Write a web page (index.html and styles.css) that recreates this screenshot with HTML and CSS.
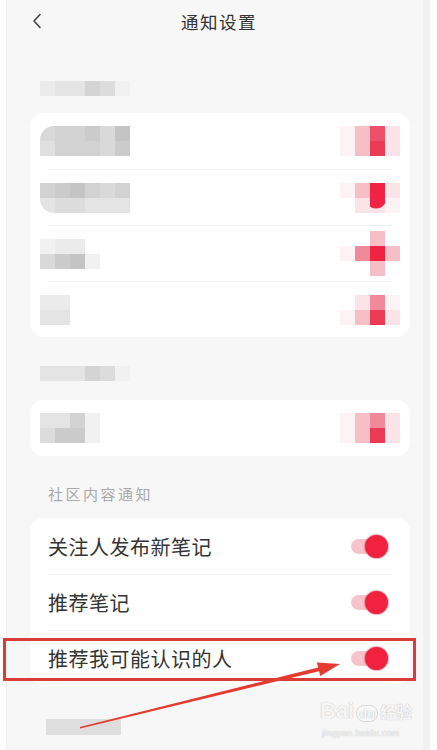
FILE: index.html
```html
<!DOCTYPE html>
<html lang="zh-CN">
<head>
    <meta charset="UTF-8">
    <meta name="viewport" content="width=device-width, initial-scale=1.0">
    <title>通知设置</title>
    <link rel="stylesheet" href="styles.css">
</head>
<body>
<div class="screen">
    <div class="page">

        <header class="topbar">
            <span class="back">
                <svg width="10" height="16" viewBox="0 0 10 16"><path d="M8 1.5 L2 8 L8 14.5" fill="none" stroke="#444" stroke-width="1.6" stroke-linecap="round" stroke-linejoin="round"/></svg>
            </span>
            <h1 class="title">通知设置</h1>
            <span></span>
        </header>

        <!-- blurred section label -->
        <div class="mosaic cols6 label-blur first-label">
            <i class="g2"></i><i class="g3"></i><i class="g3"></i><i class="g5"></i><i class="g4"></i><i class="g1"></i>
        </div>

        <section class="card">
            <div class="row">
                <div class="mosaic cols6 text-blur round-tl">
                    <i class="h2"></i><i class="h3"></i><i class="h3"></i><i class="h4"></i><i class="h2"></i><i class="h5"></i>
                    <i class="h1"></i><i class="h3"></i><i class="h3"></i><i class="h3"></i><i class="h2"></i><i class="h4"></i>
                </div>
                <div class="mosaic cols4 switch-blur">
                    <i class="p0"></i><i class="p2"></i><i class="p4"></i><i class="p1"></i>
                    <i class="p0"></i><i class="p2"></i><i class="p5"></i><i class="p1"></i>
                </div>
            </div>
            <div class="row">
                <div class="mosaic cols6 text-blur round-bl">
                    <i class="h3"></i><i class="h4"></i><i class="h5"></i><i class="h3"></i><i class="h2"></i><i class="h3"></i>
                    <i class="g3"></i><i class="g4"></i><i class="g4"></i><i class="g3"></i><i class="g3"></i><i class="g3"></i>
                </div>
                <div class="mosaic cols4 switch-blur">
                    <i class="p0"></i><i class="p2"></i><i class="p6"></i><i class="p1"></i>
                    <i class="w"></i><i class="p1"></i><i class="p1 drop"></i><i class="p0"></i>
                </div>
            </div>
            <div class="row">
                <div class="mosaic cols4 text-blur">
                    <i class="g1"></i><i class="g2"></i><i class="g2"></i><i class="w"></i>
                    <i class="h2"></i><i class="h4"></i><i class="h5"></i><i class="g1"></i>
                </div>
                <div class="mosaic cols4 switch-blur tall">
                    <i class="w"></i><i class="w"></i><i class="p2"></i><i class="w"></i>
                    <i class="p0"></i><i class="p3"></i><i class="p6"></i><i class="p2"></i>
                    <i class="w"></i><i class="w"></i><i class="p2"></i><i class="w"></i>
                </div>
            </div>
            <div class="row">
                <div class="mosaic cols2 text-blur">
                    <i class="g2"></i><i class="g2"></i>
                    <i class="g3"></i><i class="g3"></i>
                </div>
                <div class="mosaic cols4 switch-blur">
                    <i class="w"></i><i class="p1"></i><i class="p3"></i><i class="p0"></i>
                    <i class="p0"></i><i class="p2"></i><i class="p5"></i><i class="p1"></i>
                </div>
            </div>
        </section>

        <div class="mosaic cols6 label-blur second-label">
            <i class="g3"></i><i class="g3"></i><i class="g3"></i><i class="g5"></i><i class="g4"></i><i class="g1"></i>
        </div>

        <section class="card">
            <div class="row">
                <div class="mosaic cols4 text-blur">
                    <i class="g3"></i><i class="g3"></i><i class="h3"></i><i class="g1"></i>
                    <i class="g4"></i><i class="h4"></i><i class="h4"></i><i class="g1"></i>
                </div>
                <div class="mosaic cols4 switch-blur">
                    <i class="p0"></i><i class="p2"></i><i class="p3"></i><i class="p1"></i>
                    <i class="p0"></i><i class="p2"></i><i class="p5"></i><i class="p1"></i>
                </div>
            </div>
        </section>

        <h2 class="group-title">社区内容通知</h2>

        <section class="card">
            <div class="row">
                <span class="row-text">关注人发布新笔记</span>
                <span class="toggle"><span class="track"></span><span class="thumb"></span></span>
            </div>
            <div class="row">
                <span class="row-text">推荐笔记</span>
                <span class="toggle"><span class="track"></span><span class="thumb"></span></span>
            </div>
            <div class="row">
                <span class="row-text">推荐我可能认识的人</span>
                <span class="toggle"><span class="track"></span><span class="thumb"></span></span>
            </div>
        </section>

        <div class="bottom-blur"></div>
    </div>

    <!-- annotation overlays -->
    <div class="highlight"></div>
    <svg class="arrow" width="437" height="750" viewBox="0 0 437 750">
        <polygon fill="#e53a2f" points="79.8,726.9 318.1,667.4 316.9,662.5 340,664 320.3,676.1 319.1,671.2 80.2,728.5"/>
    </svg>

    <div class="watermark">
        <div class="wm-logo">Bai<span class="wm-du">du</span><span class="wm-cn">经验</span></div>
        <div class="wm-url">jingyan.baidu.com</div>
    </div>
</div>
</body>
</html>
```

FILE: styles.css
```css
body {
    margin: 0;
    background: #fdfdfd;
    font-family: "Noto Sans CJK SC", "Noto Sans", sans-serif;
    color: #333;
}

.screen {
    position: relative;
    width: 437px;
    height: 750px;
    overflow: hidden;
}

.page {
    margin-left: 6px;
    width: 424px;
    height: 750px;
    background: #f7f7f7;
    border-right: 7px solid #f0f0f0;
    border-left: 1px solid #f1f1f1;
    box-sizing: border-box;
    overflow: hidden;
}

/* header */
.topbar {
    display: grid;
    grid-template-columns: 1fr auto 1fr;
    align-items: center;
    height: 42px;
    padding-left: 8px;
}

.back {
    display: flex;
    padding-left: 17px;
}

.title {
    margin: 0;
    font-size: 17.5px;
    font-weight: 400;
    letter-spacing: 1.5px;
    color: #333;
}

/* pixelated (censored) blocks */
.mosaic {
    display: grid;
    grid-auto-rows: 15px;
}

.mosaic i {
    display: block;
}

.cols2 { grid-template-columns: repeat(2, 15px); }
.cols4 { grid-template-columns: repeat(4, 15px); }
.cols6 { grid-template-columns: repeat(6, 15px); }

.w  { background: #fff; }
.g1 { background: #f1f1f1; }
.g2 { background: #ebebeb; }
.g3 { background: #e4e4e4; }
.g4 { background: #dcdcdc; }
.g5 { background: #d4d4d4; }
.h1 { background: #e0e0e0; }
.h2 { background: #d9d9d9; }
.h3 { background: #d2d2d2; }
.h4 { background: #cbcbcb; }
.h5 { background: #c4c4c4; }

.p0 { background: #fdf2f4; }
.p1 { background: #fbe3e7; }
.p2 { background: #f6bec7; }
.p3 { background: #f0899a; }
.p4 { background: #ed5069; }
.p5 { background: #e93a56; }
.p6 { background: #f02442; }

/* thumb peeking out below the mosaic */
.drop {
    background: radial-gradient(circle at 40% 0, #ee2442 0 10px, #fbe3e7 11px);
}

.label-blur {
    margin-left: 33px;
    width: 90px;
}

.first-label {
    margin-top: 39px;
    margin-bottom: 17px;
}

.second-label {
    margin-top: 29px;
    margin-bottom: 19px;
}

.text-blur {
    margin-left: -8px;
}

.round-tl { border-top-left-radius: 14px; overflow: hidden; }
.round-bl { border-bottom-left-radius: 14px; overflow: hidden; }

.switch-blur {
    margin-right: -8px;
}

/* cards and rows */
.card {
    margin-left: 23px;
    width: 380px;
    background: #fff;
    border-radius: 14px;
}

.row {
    display: flex;
    align-items: center;
    justify-content: space-between;
    height: 56px;
    margin: 0 18px;
    box-sizing: border-box;
}

.row + .row {
    border-top: 1px solid #efefef;
}

.row-text {
    font-size: 20px;
    letter-spacing: 0.5px;
    color: #333;
}

.group-title {
    margin: 28px 0 14px 41px;
    font-size: 15px;
    line-height: 20px;
    font-weight: 400;
    letter-spacing: 2.5px;
    color: #a9a9a9;
}

/* switch */
.toggle {
    display: flex;
    align-items: center;
    margin-right: 4px;
}

.track {
    width: 20px;
    height: 15px;
    border-radius: 8px 0 0 8px;
    background: #f7c4cc;
}

.thumb {
    width: 23px;
    height: 23px;
    margin-left: -6px;
    border-radius: 50%;
    background: #f1213f;
    box-shadow: 0 0 1px 1px rgba(190, 20, 50, 0.35);
}

.bottom-blur {
    margin: 33px 0 0 39px;
    width: 75px;
    height: 16px;
    background: #dedede;
}

/* annotations */
.highlight {
    position: absolute;
    left: 3px;
    top: 638px;
    width: 413px;
    height: 43px;
    border: 3px solid #da3d37;
    box-sizing: border-box;
}

.arrow {
    position: absolute;
    left: 0;
    top: 0;
    pointer-events: none;
}

.watermark {
    position: absolute;
    left: 320px;
    top: 698px;
    color: #f6f6f6;
    text-shadow: 0 0 1px #c8c8c8, 0 0 1px #c8c8c8;
    font-family: "Liberation Sans", sans-serif;
    white-space: nowrap;
}

.wm-logo {
    font-size: 22px;
    font-weight: 700;
    line-height: 26px;
}

.wm-du {
    font-size: 13px;
    margin: 0 2px;
    padding: 0 2px;
    border-radius: 8px;
    border: 1px solid #d8d8d8;
}

.wm-cn {
    font-family: "Noto Sans CJK SC", sans-serif;
    font-size: 16px;
}

.wm-url {
    font-size: 9px;
    line-height: 12px;
    margin-left: 2px;
    letter-spacing: 0.3px;
}
```
